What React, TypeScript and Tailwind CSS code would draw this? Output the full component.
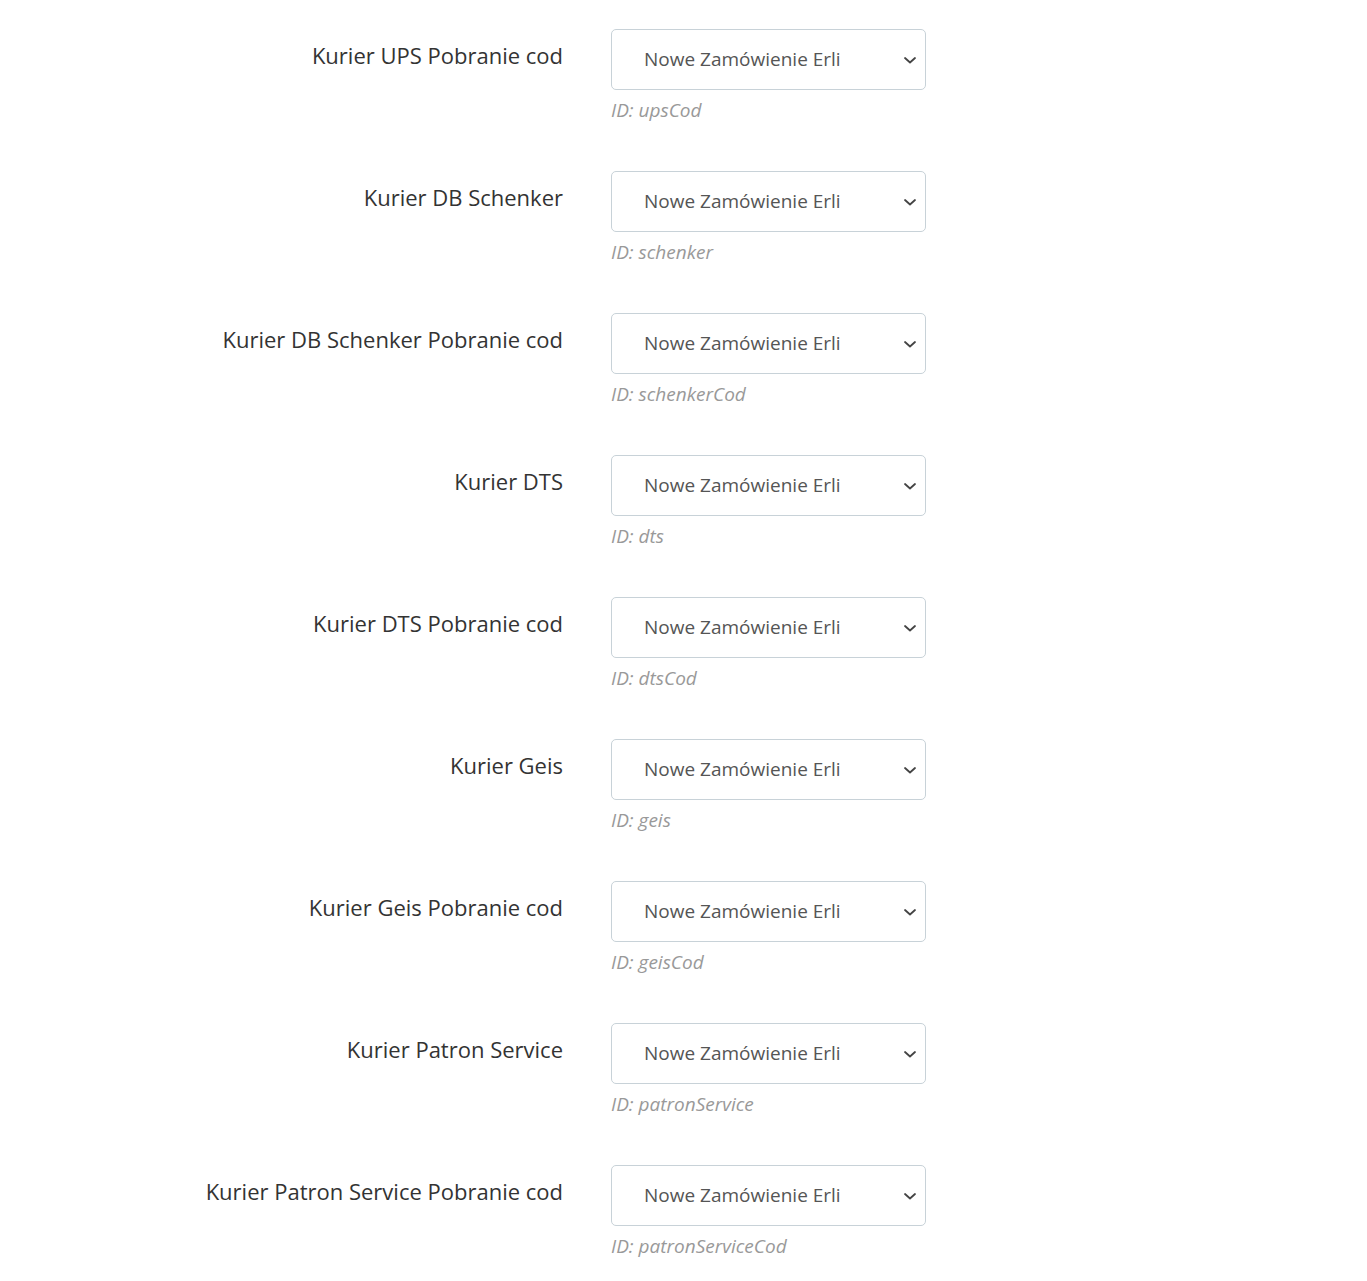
import React from "react";

const rows: [string, string][] = [
  ["Kurier UPS Pobranie cod", "upsCod"],
  ["Kurier DB Schenker", "schenker"],
  ["Kurier DB Schenker Pobranie cod", "schenkerCod"],
  ["Kurier DTS", "dts"],
  ["Kurier DTS Pobranie cod", "dtsCod"],
  ["Kurier Geis", "geis"],
  ["Kurier Geis Pobranie cod", "geisCod"],
  ["Kurier Patron Service", "patronService"],
  ["Kurier Patron Service Pobranie cod", "patronServiceCod"],
];

function Chevron() {
  return (
    <svg width="14" height="14" viewBox="0 0 14 14" fill="none">
      <path d="M2 5l5 4.5L12 5" stroke="#444" strokeWidth="1.8" strokeLinecap="round" strokeLinejoin="round" />
    </svg>
  );
}

export default function App() {
  return (
    <div className="min-h-[1281px] bg-white pt-[29px]" style={{ fontFamily: '"Open Sans", sans-serif' }}>
      <div className="flex flex-col gap-[49px]">
        {rows.map(([label, id]) => (
          <div key={id} className="flex">
            <div className="w-[563px] shrink-0 text-right text-[22px] leading-[30px] text-[#333] pt-[11px]">{label}</div>
            <div className="ml-[48px] w-[315px]">
              <div className="flex h-[61px] items-center justify-between rounded-[5px] border border-[#c8d2d8] pl-[32px] pr-[8px]">
                <span className="text-[19px] text-[#555]">Nowe Zamówienie Erli</span>
                <Chevron />
              </div>
              <div className="mt-[8px] text-[19px] leading-[24px] italic text-[#999]">ID: {id}</div>
            </div>
          </div>
        ))}
      </div>
    </div>
  );
}
